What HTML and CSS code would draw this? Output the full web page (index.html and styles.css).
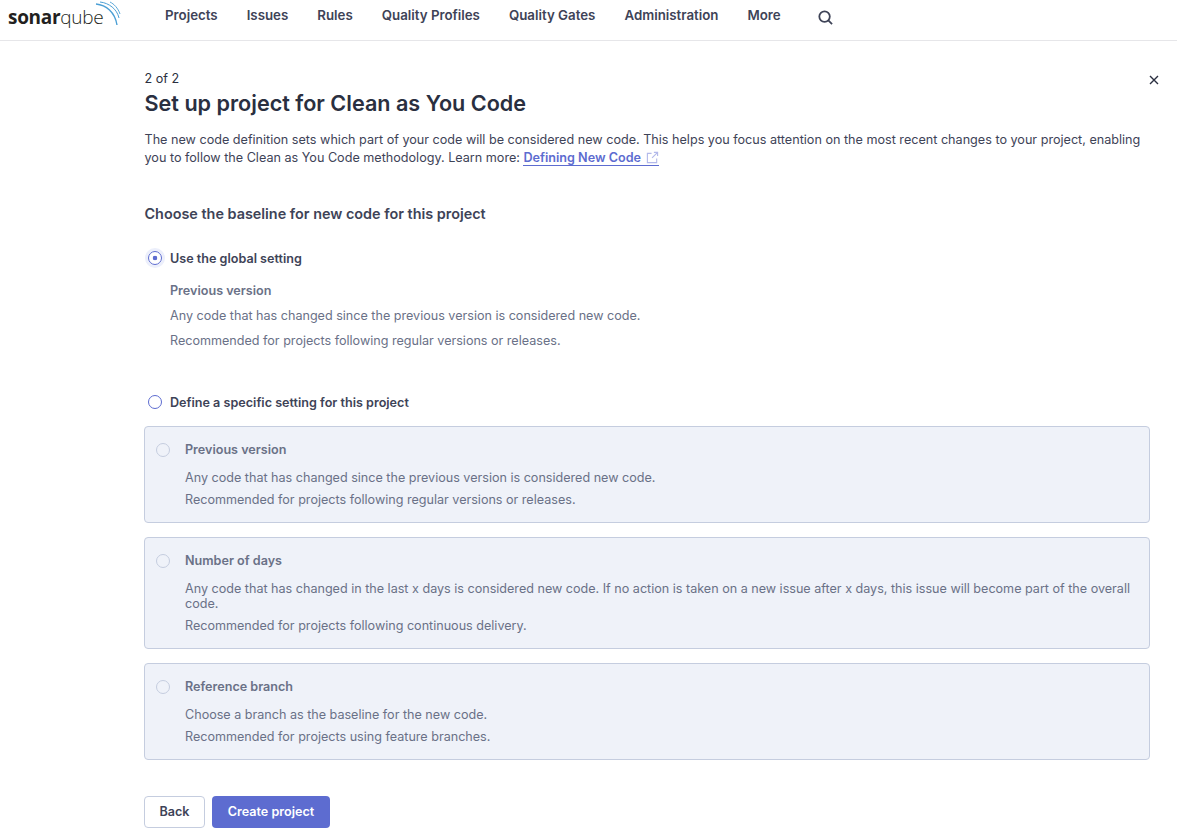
FILE: index.html
```
<!DOCTYPE html>
<html lang="en">
<head>
<meta charset="utf-8">
<title>Set up project</title>
<link rel="stylesheet" href="styles.css">
</head>
<body>
<header class="topbar">
  <div class="logo">
    <span class="logo-sonar">sonar</span><span class="logo-qube">qube</span>
    <svg class="logo-waves" width="27" height="27" viewBox="0 0 27 27" fill="none" stroke="#4b9fd5">
      <path d="M1 4C11 5 20 12 22 25" stroke-width="1.4"/>
      <path d="M5 2C14 3 22 9 24 18" stroke-width="1"/>
      <path d="M15 2C19 4 23 8 25 14" stroke-width=".9"/>
    </svg>
  </div>
  <nav class="nav">
    <a>Projects</a><a>Issues</a><a>Rules</a><a>Quality Profiles</a><a>Quality Gates</a><a>Administration</a><a>More</a>
    <svg class="search" width="15" height="15" viewBox="0 0 16 16" fill="none" stroke="#3e4357" stroke-width="1.9"><circle cx="7" cy="7" r="5.6"/><path d="M11 11l4 4"/></svg>
  </nav>
</header>
<main class="page">
  <div class="head-row">
    <div>
      <div class="step">2 of 2</div>
      <h1>Set up project for Clean as You Code</h1>
    </div>
    <svg class="close" width="10" height="10" viewBox="0 0 10 10" stroke="#2a2f40" stroke-width="1.4"><path d="M1 1l8 8M9 1l-8 8"/></svg>
  </div>
  <p class="intro">The new code definition sets which part of your code will be considered new code. This helps you focus attention on the most recent changes to your project, enabling you to follow the Clean as You Code methodology. Learn more: <a class="doc-link">Defining New Code<svg width="13" height="13" viewBox="0 0 14 14" fill="none" stroke="#b3b9ea" stroke-width="1.2"><path d="M11.5 8v4.5h-10v-10H6M8.5 1.5h4v4M12.5 1.5L6.5 7.5"/></svg></a></p>
  <h2>Choose the baseline for new code for this project</h2>

  <div class="choice">
    <span class="radio radio-on"></span>
    <span class="choice-label">Use the global setting</span>
  </div>
  <div class="global">
    <div class="global-title">Previous version</div>
    <p>Any code that has changed since the previous version is considered new code.</p>
    <p>Recommended for projects following regular versions or releases.</p>
  </div>

  <div class="choice choice-specific">
    <span class="radio"></span>
    <span class="choice-label">Define a specific setting for this project</span>
  </div>

  <section class="cards">
    <div class="card">
      <div class="card-title"><span class="radio radio-off"></span>Previous version</div>
      <p>Any code that has changed since the previous version is considered new code.</p>
      <p>Recommended for projects following regular versions or releases.</p>
    </div>
    <div class="card">
      <div class="card-title"><span class="radio radio-off"></span>Number of days</div>
      <p>Any code that has changed in the last x days is considered new code. If no action is taken on a new issue after x days, this issue will become part of the overall code.</p>
      <p>Recommended for projects following continuous delivery.</p>
    </div>
    <div class="card">
      <div class="card-title"><span class="radio radio-off"></span>Reference branch</div>
      <p>Choose a branch as the baseline for the new code.</p>
      <p>Recommended for projects using feature branches.</p>
    </div>
  </section>

  <div class="actions">
    <button class="btn btn-back">Back</button>
    <button class="btn btn-primary">Create project</button>
  </div>
</main>
</body>
</html>
```

FILE: styles.css
```
* { box-sizing: border-box; }
html, body { margin: 0; padding: 0; background: #fff; }
body {
  font-family: Inter, "Liberation Sans", sans-serif;
  font-size: 12.6px;
  color: #2a2f40;
  height: 837px;
  overflow: hidden;
}
p { margin: 0; }
.topbar {
  height: 41px;
  border-bottom: 1px solid #e6e6e9;
  display: flex;
  padding-left: 8px;
}
.logo {
  position: relative;
  width: 157px;
  padding-top: 4px;
  font-size: 19px;
  line-height: 26px;
  letter-spacing: -0.3px;
  color: #231f20;
  font-family: "Open Sans", sans-serif;
}
.logo-sonar { font-weight: 700; }
.logo-qube { font-weight: 300; }
.logo-waves { position: absolute; left: 87px; top: 0; }
.nav {
  display: flex;
  align-items: center;
  gap: 29px;
  height: 30px;
  font-weight: 600;
  font-size: 13.3px;
  color: #3e4357;
}
.search { margin-left: 8px; margin-top: 4px; }
.page {
  padding: 30px 27px 0 144px;
}
.head-row {
  display: flex;
  justify-content: space-between;
  align-items: flex-start;
}
.step { line-height: 16px; margin-bottom: 2px; margin-left: .5px; }
h1 {
  margin: 0 0 0 .5px;
  font-size: 21.6px;
  line-height: 28px;
  font-weight: 600;
  color: #2a2f40;
}
.close { margin-top: 4px; margin-right: -9px; }
.intro {
  margin: 14px 0 0 .5px;
  font-size: 12.62px;
  line-height: 18px;
  color: #3e4357;
}
.doc-link {
  color: #5d6cd0;
  font-weight: 600;
  text-decoration: none;
  border-bottom: 1px solid #5d6cd0;
}
.doc-link svg { margin-left: 5px; vertical-align: -2px; }
h2 {
  margin: 37px 0 0 .5px;
  font-size: 14.4px;
  line-height: 20px;
  font-weight: 600;
  color: #3e4357;
}
.choice {
  display: flex;
  align-items: center;
  gap: 7.6px;
  margin-top: 25px;
  height: 18px;
  padding-left: 4px;
}
.choice-specific { margin-top: 43px; }
.choice-label { font-weight: 600; color: #3e4357; }
.radio {
  width: 14.4px;
  height: 14.4px;
  border-radius: 50%;
  border: 1px solid #5d6cd0;
  flex: none;
  background: #fff;
  display: inline-block;
}
.radio-on {
  background: radial-gradient(circle, #5d6cd0 0 2px, #fff 2.6px);
  box-shadow: 0 0 0 3px #eceffb;
}
.radio-off {
  border-color: #c5cddf;
  background: #eff2f9;
  margin-right: 14.6px;
}
.global { padding-left: 26px; margin-top: 15px; color: #6a7187; }
.global-title { font-weight: 600; line-height: 18px; margin-bottom: 7px; }
.global p { line-height: 18px; margin-bottom: 7px; font-size: 12.58px; }
.cards { margin-top: 15px; display: flex; flex-direction: column; gap: 14px; }
.card {
  background: #eff2f9;
  border: 1px solid #c5cddf;
  border-radius: 4px;
  padding: 14px 12px 8.5px 11px;
  color: #6a7187;
}
.card-title {
  display: flex;
  align-items: center;
  font-weight: 600;
  line-height: 18px;
  margin-bottom: 10.5px;
}
.card p { padding-left: 29px; line-height: 15px; margin-bottom: 7px; font-size: 12.58px; }
.actions { margin-top: 36px; display: flex; gap: 7px; }
.btn {
  font-family: inherit;
  font-size: 12.6px;
  font-weight: 600;
  height: 32px;
  border-radius: 4px;
  padding: 0 0 1px;
  white-space: nowrap;
}
.btn-back { background: #fff; border: 1px solid #c5cddf; color: #3e4357; width: 61px; }
.btn-primary { background: #5d6cd0; border: 0; color: #fff; width: 118px; }
```
